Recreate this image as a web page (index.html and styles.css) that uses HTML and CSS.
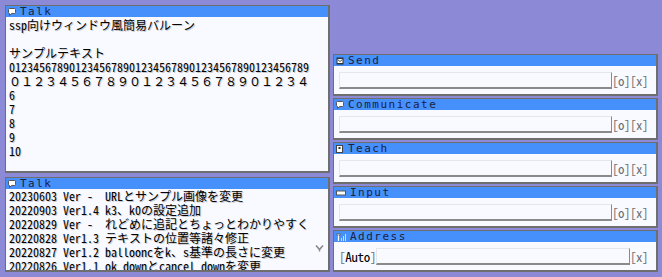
FILE: index.html
```html
<!DOCTYPE html>
<html lang="ja">
<head>
<meta charset="utf-8">
<title>Balloon</title>
<link rel="stylesheet" href="styles.css">
</head>
<body>
<div class="screen">
  <div class="left">
    <section class="win talk-main">
      <header class="bar">
        <svg class="ico" width="8" height="8" viewBox="0 0 8 8"><path d="M1.5 0.5h5a1 1 0 0 1 1 1v3a1 1 0 0 1-1 1h-3l-2 2v-2h0a1 1 0 0 1-1-1v-3a1 1 0 0 1 1-1z" fill="#fff" stroke="#555" stroke-width="1"/></svg>
        <span class="title">Talk</span>
      </header>
      <div class="body">
        <div class="ln">ssp向けウィンドウ風簡易バルーン</div>
        <div class="ln">&nbsp;</div>
        <div class="ln">サンプルテキスト</div>
        <div class="ln">01234567890123456789012345678901234567890123456789</div>
        <div class="ln">０１２３４５６７８９０１２３４５６７８９０１２３４</div>
        <div class="ln">6</div>
        <div class="ln">7</div>
        <div class="ln">8</div>
        <div class="ln">9</div>
        <div class="ln">10</div>
      </div>
    </section>
    <section class="win talk-log">
      <header class="bar">
        <svg class="ico" width="8" height="8" viewBox="0 0 8 8"><path d="M1.5 0.5h5a1 1 0 0 1 1 1v3a1 1 0 0 1-1 1h-3l-2 2v-2h0a1 1 0 0 1-1-1v-3a1 1 0 0 1 1-1z" fill="#fff" stroke="#555" stroke-width="1"/></svg>
        <span class="title">Talk</span>
      </header>
      <div class="body log">
        <div class="ln">20230603 Ver -  URLとサンプル画像を変更</div>
        <div class="ln">20220903 Ver1.4 k3、k0の設定追加</div>
        <div class="ln">20220829 Ver -  れどめに追記とちょっとわかりやすく</div>
        <div class="ln">20220828 Ver1.3 テキストの位置等諸々修正</div>
        <div class="ln">20220827 Ver1.2 ballooncをk、s基準の長さに変更</div>
        <div class="ln">20220826 Ver1.1 ok_downとcancel_downを変更</div>
        <svg class="more" width="9" height="8" viewBox="0 0 9 8"><path d="M1 1.5l3.5 4 3.5-4" fill="none" stroke="#8a8a8a" stroke-width="1.6"/><path d="M4.5 5v2.5" stroke="#8a8a8a" stroke-width="1.4"/></svg>
      </div>
    </section>
  </div>
  <div class="right">
    <section class="win panel">
      <header class="bar">
        <svg class="ico" width="8" height="8" viewBox="0 0 8 8"><rect x="0.5" y="0.5" width="7" height="7" fill="#333"/><rect x="1.5" y="2" width="5" height="4" fill="#fff"/><path d="M1.5 2.5l2.5 2 2.5-2" fill="none" stroke="#333" stroke-width="0.9"/></svg>
        <span class="title">Send</span>
      </header>
      <div class="row"><span class="field"></span><span class="btn">[o]</span><span class="btn">[x]</span></div>
    </section>
    <section class="win panel">
      <header class="bar">
        <svg class="ico" width="8" height="8" viewBox="0 0 8 8"><path d="M1.5 0.5h5a1 1 0 0 1 1 1v3a1 1 0 0 1-1 1h-3l-2 2v-2h0a1 1 0 0 1-1-1v-3a1 1 0 0 1 1-1z" fill="#fff" stroke="#555" stroke-width="1"/></svg>
        <span class="title">Communicate</span>
      </header>
      <div class="row"><span class="field"></span><span class="btn">[o]</span><span class="btn">[x]</span></div>
    </section>
    <section class="win panel">
      <header class="bar">
        <svg class="ico" width="8" height="8" viewBox="0 0 8 8"><rect x="0.5" y="0.5" width="6" height="7" fill="#fff" stroke="#444"/><rect x="2.5" y="2" width="2" height="2" fill="#333"/></svg>
        <span class="title">Teach</span>
      </header>
      <div class="row"><span class="field"></span><span class="btn">[o]</span><span class="btn">[x]</span></div>
    </section>
    <section class="win panel">
      <header class="bar">
        <svg class="ico" width="10" height="8" viewBox="0 0 10 8"><rect x="0.5" y="2" width="9" height="4" fill="#fff" stroke="#555"/></svg>
        <span class="title">Input</span>
      </header>
      <div class="row"><span class="field"></span><span class="btn">[o]</span><span class="btn">[x]</span></div>
    </section>
    <section class="win panel">
      <header class="bar">
        <svg class="ico" width="10" height="8" viewBox="0 0 10 8"><path d="M0.5 1h4l-2 2.5z" fill="#fff" stroke="#555" stroke-width="0.8"/><path d="M2.5 3v5" stroke="#fff" stroke-width="1.2"/><rect x="5" y="5" width="1" height="3" fill="#ddd"/><rect x="7" y="3" width="1" height="5" fill="#ddd"/><rect x="9" y="1" width="1" height="7" fill="#ddd"/></svg>
        <span class="title">Address</span>
      </header>
      <div class="row"><span class="auto"><span class="br">[</span>Auto<span class="br">]</span></span><span class="field"></span><span class="btn">[x]</span></div>
    </section>
  </div>
</div>
</body>
</html>
```
FILE: styles.css
```css
* { box-sizing: border-box; }
html, body { margin: 0; padding: 0; }
body {
  width: 662px;
  height: 277px;
  background: #8c8ad6;
  overflow: hidden;
  font-family: "Noto Sans Mono CJK JP", "Noto Sans CJK JP", "DejaVu Sans Mono", monospace;
}
.screen {
  display: grid;
  grid-template-columns: 325px 325px;
  column-gap: 3px;
  padding: 5px;
}
.left {
  display: flex;
  flex-direction: column;
  gap: 4px;
}
.right {
  display: flex;
  flex-direction: column;
  gap: 2px;
  padding-top: 49px;
}
.win {
  background: #f8faff;
  border-style: solid;
  border-color: #6e6e6e;
  border-width: 1px 2px 2px 1px;
  overflow: hidden;
  display: flex;
  flex-direction: column;
}
.talk-main { height: 168px; }
.talk-log { height: 95px; }
.panel { height: 42px; }
.bar {
  height: 11px;
  flex: none;
  background: #4590fa;
  display: flex;
  align-items: center;
  padding-left: 2px;
  gap: 4px;
}
.ico { display: block; flex: none; }
.title {
  font-family: "DejaVu Sans Mono", monospace;
  font-size: 11px;
  line-height: 11px;
  letter-spacing: 1.5px;
  color: #1c2240;
}
.body {
  padding: 1px 3px 0 3px;
  font-size: 12px;
  line-height: 14px;
  color: #000;
  text-shadow: 1px 1px 0 #c9c9cf;
  position: relative;
  flex: 1;
  overflow: hidden;
}
.ln {
  white-space: pre;
  height: 14px;
}
.log { padding-top: 0; }
.more {
  position: absolute;
  right: 4px;
  top: 55px;
}
.row {
  display: flex;
  align-items: center;
  padding: 0 8px 0 5px;
  flex: 1;
}
.field {
  display: block;
  flex: 1;
  height: 17px;
  background: #f8faff;
  border-style: solid;
  border-width: 1px 1px 2px 1px;
  border-color: #e4e6ea #8a8a8a #8a8a8a #e4e6ea;
}
.btn {
  font-size: 13px;
  line-height: 17px;
  color: #707070;
  width: 18px;
  text-align: center;
  flex: none;
  letter-spacing: -0.5px;
}
.btn:first-of-type { margin-left: 1px; }
.auto {
  font-size: 13px;
  line-height: 17px;
  color: #000;
  flex: none;
  letter-spacing: -0.3px;
}
.br { color: #707070; }
```
